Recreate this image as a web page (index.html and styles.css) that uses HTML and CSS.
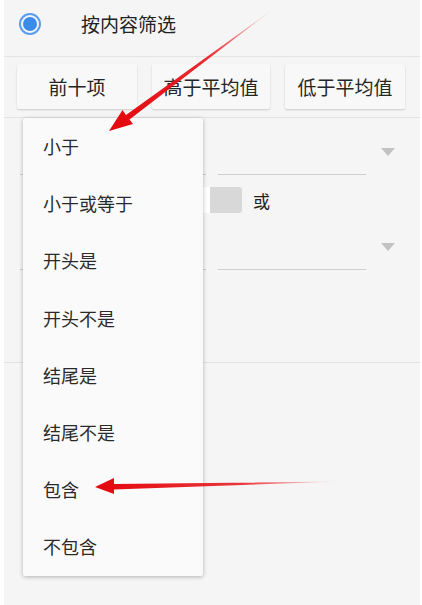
FILE: index.html
```html
<!DOCTYPE html>
<html lang="zh-CN">
<head>
    <meta charset="UTF-8">
    <meta name="viewport" content="width=device-width, initial-scale=1.0">
    <title>按内容筛选</title>
    <link rel="stylesheet" href="styles.css">
</head>
<body>
    <div class="panel">
        <div class="filter-head">
            <span class="radio"><span class="radio-dot"></span></span>
            <span class="filter-title">按内容筛选</span>
        </div>

        <div class="quick-buttons">
            <button class="quick-btn btn-a">前十项</button>
            <button class="quick-btn btn-b">高于平均值</button>
            <button class="quick-btn btn-c">低于平均值</button>
        </div>

        <section class="conditions">
            <div class="cond-row">
                <div class="cond-field left"></div>
                <div class="cond-field right"><span class="caret"></span></div>
            </div>
            <div class="logic-row">
                <div class="logic-toggle">
                    <span class="logic-on">且</span>
                    <span class="logic-off"></span>
                </div>
                <span class="logic-label">或</span>
            </div>
            <div class="cond-row">
                <div class="cond-field left"></div>
                <div class="cond-field right"><span class="caret"></span></div>
            </div>
        </section>
    </div>

    <!-- popup opened from the first condition -->
    <ul class="menu">
        <li>小于</li>
        <li>小于或等于</li>
        <li>开头是</li>
        <li>开头不是</li>
        <li>结尾是</li>
        <li>结尾不是</li>
        <li>包含</li>
        <li>不包含</li>
    </ul>

    <svg class="marks" width="422" height="605" viewBox="0 0 422 605">
        <defs>
            <linearGradient id="fadeA" gradientUnits="userSpaceOnUse" x1="272" y1="10" x2="110" y2="130">
                <stop offset="0" stop-color="#e8141a" stop-opacity="0.1"/>
                <stop offset="0.4" stop-color="#e8141a" stop-opacity="0.9"/>
                <stop offset="1" stop-color="#e3060c"/>
            </linearGradient>
            <linearGradient id="fadeB" gradientUnits="userSpaceOnUse" x1="340" y1="482" x2="95" y2="487">
                <stop offset="0" stop-color="#e8141a" stop-opacity="0"/>
                <stop offset="0.4" stop-color="#e8141a" stop-opacity="0.85"/>
                <stop offset="1" stop-color="#e3060c"/>
            </linearGradient>
        </defs>
        <polygon fill="url(#fadeA)" points="272,10 129.5,119.5 133,124 109,131 122.5,110 126,115"/>
        <polygon fill="url(#fadeB)" points="340,481.5 114,484 114,478 95,487 114,494 114,489.5"/>
    </svg>
</body>
</html>
```

FILE: styles.css
```css
* {
    margin: 0;
    padding: 0;
    box-sizing: border-box;
    font-family: 'Noto Sans CJK SC', 'Noto Sans', sans-serif;
}

body {
    background-color: #ffffff;
    position: relative;
    width: 422px;
    height: 605px;
    overflow: hidden;
}

.panel {
    margin: 0 2px 0 4px;
    height: 605px;
    background-color: #f5f5f5;
}

.filter-head {
    height: 57px;
    display: flex;
    align-items: center;
    padding-left: 15px;
    padding-bottom: 9px;
    border-bottom: 1px solid #e4e4e4;
}

.radio {
    width: 22px;
    height: 22px;
    border: 2px solid #5b9ded;
    border-radius: 50%;
    display: flex;
    align-items: center;
    justify-content: center;
}

.radio-dot {
    width: 14px;
    height: 14px;
    border-radius: 50%;
    background-color: #3a8bea;
}

.filter-title {
    margin-left: 40px;
    font-size: 19px;
    color: #222;
}

.quick-buttons {
    display: flex;
    gap: 15px;
    padding: 7px 0 0 13px;
    height: 61px;
    border-bottom: 1px solid #e4e4e4;
}

.quick-btn {
    height: 45px;
    border: none;
    border-radius: 2px;
    background-color: #f8f8f8;
    box-shadow: 0 1px 2px rgba(0,0,0,0.18);
    font-size: 19px;
    color: #262626;
}

.btn-a { width: 120px; }
.btn-b { width: 118px; }
.btn-c { width: 120px; }

.conditions {
    height: 245px;
    border-bottom: 1px solid #e2e2e2;
}

.cond-row {
    display: flex;
    height: 57px;
    padding-left: 16px;
    gap: 12px;
}

.cond-field {
    height: 57px;
    border-bottom: 1px solid #cfcfcf;
}

.cond-field.left { width: 186px; }

.cond-field.right {
    width: 148px;
    position: relative;
}

.caret {
    position: absolute;
    right: -29px;
    top: 30px;
    width: 0;
    height: 0;
    border-left: 7px solid transparent;
    border-right: 7px solid transparent;
    border-top: 8px solid #c2c2c2;
}

.logic-row {
    display: flex;
    align-items: center;
    height: 26px;
    margin-top: 12px;
    padding-left: 146px;
}

.logic-toggle {
    display: flex;
    width: 92px;
    height: 26px;
    border-radius: 3px;
    overflow: hidden;
}

.logic-on {
    flex: 1;
    background-color: #ffffff;
    font-size: 16px;
    text-align: center;
    line-height: 26px;
}

.logic-off {
    width: 32px;
    background-color: #d8d8d8;
}

.logic-label {
    margin-left: 11px;
    font-size: 17px;
    color: #222;
}

.menu {
    position: absolute;
    left: 23px;
    top: 118px;
    width: 180px;
    list-style: none;
    background-color: #fafafa;
    box-shadow: 0 1px 4px rgba(0,0,0,0.28);
    border-radius: 2px;
}

.menu li {
    height: 57.2px;
    line-height: 57.2px;
    padding-left: 20px;
    font-size: 18px;
    color: #2a2a2a;
}

.marks {
    position: absolute;
    left: 0;
    top: 0;
    pointer-events: none;
}
```
